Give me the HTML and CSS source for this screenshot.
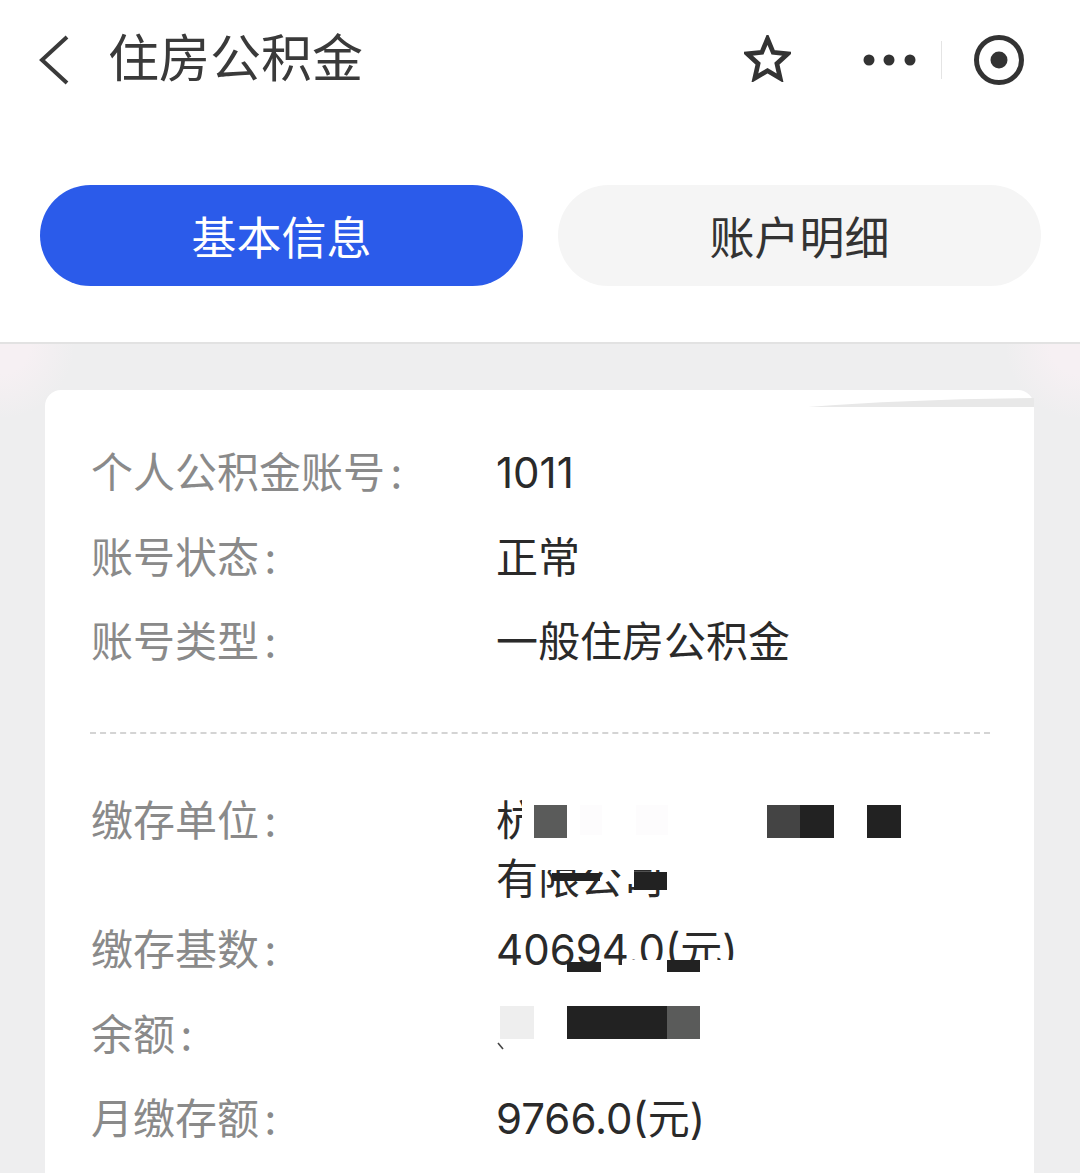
FILE: index.html
```html
<!DOCTYPE html>
<html lang="zh-CN">
<head>
  <meta charset="UTF-8" />
  <meta name="viewport" content="width=device-width, initial-scale=1.0" />
  <title>住房公积金</title>
  <link rel="stylesheet" href="styles.css">
</head>
<body>
  <header class="top">
    <div class="nav">
      <svg class="back" width="32" height="50" viewBox="0 0 32 50"><path d="M29 2 L4 25 L29 48" fill="none" stroke="#3a3a3a" stroke-width="4"/></svg>
      <h1 class="title">住房公积金</h1>
      <svg class="star" width="47" height="47" viewBox="0 0 50 50"><path d="M25 4 L31 18.5 L46.500 20 L35 30.500 L38.500 46 L25 38 L11.500 46 L15 30.500 L3.500 20 L19 18.500 Z" fill="none" stroke="#333" stroke-width="5" stroke-linejoin="miter"/></svg>
      <div class="capsule">
        <svg width="54" height="14" viewBox="0 0 54 14"><circle cx="6" cy="7" r="5.500" fill="#333"/><circle cx="26" cy="7" r="5.500" fill="#333"/><circle cx="47" cy="7" r="5.500" fill="#333"/></svg>
        <span class="capsule-line"></span>
        <svg width="52" height="52" viewBox="0 0 52 52"><circle cx="26" cy="26" r="22.500" fill="none" stroke="#333" stroke-width="5"/><circle cx="26" cy="26" r="8.500" fill="#333"/></svg>
      </div>
    </div>
    <div class="tabs">
      <div class="tab tab-on">基本信息</div>
      <div class="tab">账户明细</div>
    </div>
  </header>

  <main class="content">
    <section class="card">
      <div class="row"><span class="label">个人公积金账号 :</span><span class="value">1011</span></div>
      <div class="row"><span class="label">账号状态 :</span><span class="value">正常</span></div>
      <div class="row"><span class="label">账号类型 :</span><span class="value">一般住房公积金</span></div>
      <div class="divider"></div>
      <div class="row row-tall"><span class="label">缴存单位 :</span><span class="value">杭州<br>有限公司</span></div>
      <div class="row"><span class="label">缴存基数 :</span><span class="value">40694.0(元)</span></div>
      <div class="row"><span class="label">余额 :</span><span class="value"></span></div>
      <div class="row"><span class="label">月缴存额 :</span><span class="value">9766.0(元)</span></div>
    </section>
  </main>

  <!-- mosaic over the private values -->
  <div class="cover c-w1"></div>
  <div class="cover c-w2"></div>
  <div class="cover c-w3"></div>
  <div class="cover c-w4"></div>
  <div class="cover mid c1"></div>
  <div class="cover c-faint1"></div>
  <div class="cover c-faint2"></div>
  <div class="cover dark2 c2"></div>
  <div class="cover dark c3"></div>
  <div class="cover dark c4"></div>
  <div class="cover dark c5"></div>
  <div class="cover dark c6"></div>
  <div class="cover dark c7"></div>
  <div class="cover dark c8"></div>
  <div class="cover c9"></div>
  <div class="cover dark c10"></div>
  <div class="cover mid c11"></div>
  <svg class="glare" width="240" height="30" viewBox="0 0 240 30"><path d="M0 15 Q100 7 226 6 L226 15 Z" fill="#e8e8e8"/></svg>
  <svg class="tick" width="8" height="10" viewBox="0 0 8 10"><path d="M1 1 L6 7" stroke="#444" stroke-width="1.600"/></svg>
</body>
</html>
```

FILE: styles.css
```css
html, body {
  margin: 0;
  padding: 0;
}
body {
  position: relative;
  width: 1080px;
  height: 1173px;
  overflow: hidden;
  background: #eeeeef;
  font-family: "Noto Sans CJK SC", sans-serif;
}
.top {
  height: 342px;
  background: #fff;
  border-bottom: 2px solid #e2e2e2;
}
.nav {
  display: flex;
  align-items: center;
  height: 120px;
  padding-left: 38px;
}
.back {
  flex: none;
}
.title {
  margin: -10px 0 0 38px;
  font-size: 51px;
  font-weight: 400;
  line-height: 60px;
  color: #3a3a3a;
}
.star {
  margin: -4px 0 0 auto;
  flex: none;
}
.capsule {
  display: flex;
  align-items: center;
  margin-left: 72px;
  margin-right: 55px;
}
.capsule-line {
  width: 1px;
  height: 38px;
  margin: 0 31px 0 24px;
  background: #e4e4e4;
}
.tabs {
  display: flex;
  gap: 35px;
  padding: 65px 39px 0 40px;
}
.tab {
  flex: 1;
  height: 101px;
  border-radius: 51px;
  background: #f5f5f5;
  color: #333;
  font-size: 45px;
  line-height: 101px;
  text-align: center;
}
.tab-on {
  background: #2b5bea;
  color: #fff;
}
.content {
  padding: 46px 46px 0 45px;
  background:
    radial-gradient(circle at 0 0, #f6f0f3 0, #f6f0f3 30px, rgba(246, 240, 243, 0) 75px),
    radial-gradient(circle at 100% 0, #f6f0f3 0, #f6f0f3 30px, rgba(246, 240, 243, 0) 75px);
  background-repeat: no-repeat;
}
.card {
  background: #fff;
  border-radius: 16px 16px 0 0;
  padding: 54px 44px 0 46px;
  height: 800px;
}
.row {
  display: flex;
  min-height: 58px;
  font-size: 42px;
  line-height: 58px;
  margin-bottom: 26.500px;
}
.row-tall {
  margin-bottom: 13px;
}
.label {
  flex: none;
  width: 405px;
  margin-top: -3px;
  word-spacing: -4px;
  color: #8a8a8a;
}
.value {
  color: #2a2a2a;
  font-family: Inter, "Noto Sans CJK SC", sans-serif;
}
.divider {
  margin: 61px 0 58px -1px;
  border-top: 2px dashed #d4d4d4;
}
.cover {
  position: absolute;
  background: #fff;
}
.dark { background: #222; }
.dark2 { background: #444; }
.mid { background: #5a5b5a; }
/* white patches hide parts of the glyphs */
.c-w1 { left: 522px; top: 795px; width: 80px; height: 52px; }
.c-w2 { left: 539px; top: 852px; width: 130px; height: 18px; }
.c-w3 { left: 622px; top: 960px; width: 130px; height: 18px; }
.c-w4 { left: 622px; top: 870px; width: 12px; height: 14px; }
.c1 { left: 534px; top: 805px; width: 33px; height: 33px; }
.c-faint1 { left: 580px; top: 805px; width: 22px; height: 30px; background: #fdfcfd; }
.c-faint2 { left: 636px; top: 805px; width: 32px; height: 30px; background: #fdfcfd; }
.c2 { left: 767px; top: 805px; width: 33px; height: 33px; }
.c3 { left: 800px; top: 805px; width: 34px; height: 33px; }
.c4 { left: 867px; top: 805px; width: 34px; height: 33px; }
.c5 { left: 552px; top: 873px; width: 48px; height: 8px; }
.c6 { left: 634px; top: 872px; width: 33px; height: 18px; }
.c7 { left: 567px; top: 962px; width: 34px; height: 10px; }
.c8 { left: 667px; top: 960px; width: 33px; height: 12px; }
.c9 { left: 500px; top: 1006px; width: 34px; height: 33px; background: #eee; }
.c10 { left: 567px; top: 1006px; width: 100px; height: 33px; }
.c11 { left: 667px; top: 1006px; width: 33px; height: 33px; }
.glare {
  position: absolute;
  left: 808px;
  top: 392px;
}
.tick {
  position: absolute;
  left: 497px;
  top: 1042px;
}
```
